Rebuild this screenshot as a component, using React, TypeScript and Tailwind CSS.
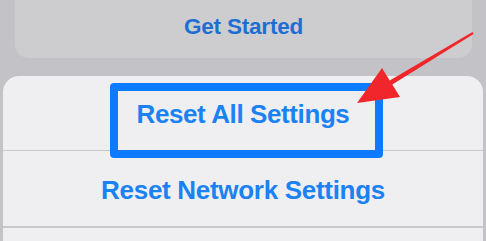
export default function App() {
  return (
    <div className="relative h-[241px] w-[486px] overflow-hidden bg-[#c3c3c7] font-['Liberation_Sans',Arial,sans-serif]">
      {/* dimmed card behind the sheet */}
      <div className="mx-[15px] mr-[14px] flex h-[58px] items-center justify-center rounded-b-[14px] bg-[#cdcdd0] pb-[4px]">
        <span className="text-[22.5px] font-bold tracking-[-0.2px] text-[#1e6fd2]">Get Started</span>
      </div>

      {/* action sheet */}
      <div className="mx-[3px] mt-[18px] rounded-t-[16px] bg-[#efeff1]">
        <div className="flex h-[75px] items-center justify-center border-b border-[#c9c9cc] pt-[2px]">
          <span className="text-[26px] font-bold tracking-[-0.4px] text-[#1a82f2]">Reset All Settings</span>
        </div>
        <div className="flex h-[77px] items-center justify-center border-b-2 border-[#c9c9cc] pt-[3px]">
          <span className="text-[26px] font-bold tracking-[-0.3px] text-[#1a82f2]">Reset Network Settings</span>
        </div>
        <div className="h-[20px]" />
      </div>

      {/* annotation box */}
      <div className="absolute left-[110px] top-[83px] h-[75px] w-[273px] rounded-[4px] border-[8px] border-[#0b7bff]" />

      {/* annotation arrow */}
      <svg className="absolute left-0 top-0" width="486" height="241" viewBox="0 0 486 241">
        <polygon
          points="357,103 382,68 389.7,80.4 472.5,32.1 473.5,33.9 392.3,84.6 400,97"
          fill="#f0262b"
        />
      </svg>
    </div>
  );
}
